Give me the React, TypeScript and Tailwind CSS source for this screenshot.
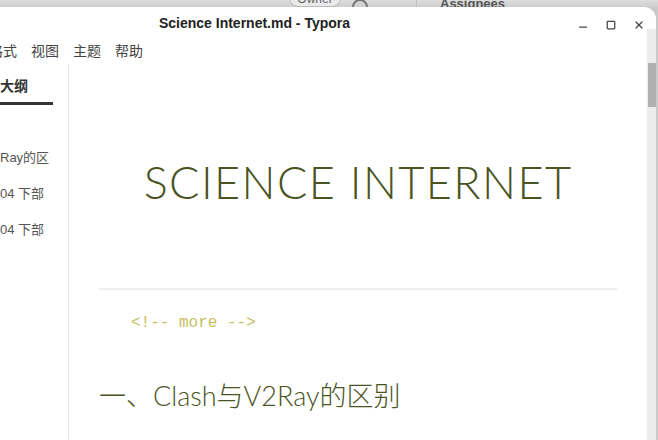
import { Minus, Square, X } from 'lucide-react';

const outline = ['Ray的区', '04 下部', '04 下部'];
const menus = ['格式', '视图', '主题', '帮助'];

export default function App() {
  return (
    <div className="w-[658px] h-[440px] overflow-hidden bg-[#c9c9c9] font-['Liberation_Sans','Noto_Sans_CJK_SC',sans-serif]">
      {/* background window strip */}
      <div className="h-[7px] overflow-hidden bg-gradient-to-b from-[#dedede] to-[#cdcdcd] relative">
        <div className="flex items-end h-[7px] pl-[289px]">
          <div className="w-[52px] h-[18px] rounded-full border border-[#b9b9b9] bg-[#eaeaea] flex items-end justify-center text-[12px] text-[#666] leading-[14px]">
            Owner
          </div>
          <div className="ml-[11px] w-[16px] h-[16px] rounded-full border-2 border-[#777] mb-[-8px]"></div>
          <div className="ml-[48px] w-px h-[20px] bg-[#bdbdbd]"></div>
          <div className="ml-[23px] text-[13px] font-bold text-[#555] leading-none mb-[-3px]">Assignees</div>
        </div>
      </div>

      {/* typora window */}
      <div className="w-[656px] h-[433px] bg-white rounded-tr-[12px] flex flex-col">
        <div className="h-[32px] flex items-center relative">
          <div className="flex-1 text-center text-[14px] font-bold text-[#222] pr-[147px] pt-[1px]">
            Science Internet.md - Typora
          </div>
          <div className="absolute right-[11px] top-[10px] flex items-center gap-[17px] text-[#444]">
            <Minus className="w-[12px] h-[12px] mt-[4px]" strokeWidth={2.5} />
            <Square className="w-[10px] h-[10px]" strokeWidth={3} />
            <X className="w-[12px] h-[12px]" strokeWidth={2.5} />
          </div>
        </div>

        <div className="h-[24px] flex items-center gap-[14px] ml-[-11px] text-[14px] text-[#444]">
          {menus.map((m) => (
            <span key={m}>{m}</span>
          ))}
        </div>

        <div className="flex-1 flex min-h-0">
          <div className="w-[69px] border-r border-[#e6e6e6] mt-[1px] shrink-0">
            <div className="pt-[14px] text-[14px] font-bold text-[#333] leading-[16px]">大纲</div>
            <div className="mt-[8px] w-[53px] h-[3px] bg-[#333]"></div>
            <div className="mt-[44px] flex flex-col gap-[19px]">
              {outline.map((o, i) => (
                <div key={i} className="text-[13px] text-[#555] leading-[17px]">
                  {o}
                </div>
              ))}
            </div>
          </div>

          <div className="flex-1 flex min-w-0">
            <div className="flex-1 pl-[30px] pr-[30px]">
              <h1 className="mt-[91px] text-center text-[45px] font-light tracking-[1.4px] text-[#4a5423] leading-[56px] font-['Lato',sans-serif]">
                SCIENCE INTERNET
              </h1>
              <hr className="mt-[78px] border-t-2 border-[#efefef]" />
              <div className="mt-[23px] pl-[32px] font-['Liberation_Mono',monospace] text-[16px] text-[#c7bd5e] leading-[20px]">
                {'<!-- more -->'}
              </div>
              <h2 className="mt-[45px] text-[27px] font-light text-[#4a5423] leading-[36px] font-['Lato','Noto_Sans_CJK_SC',sans-serif]">
                一、Clash与V2Ray的区别
              </h2>
            </div>
            <div className="w-[9px] bg-[#ececec] shrink-0 pt-[3px] mt-[-34px] pl-[1px]">
              <div className="h-[44px] bg-[#b0b0b0] mt-[31px]"></div>
            </div>
          </div>
        </div>
      </div>
    </div>
  );
}
